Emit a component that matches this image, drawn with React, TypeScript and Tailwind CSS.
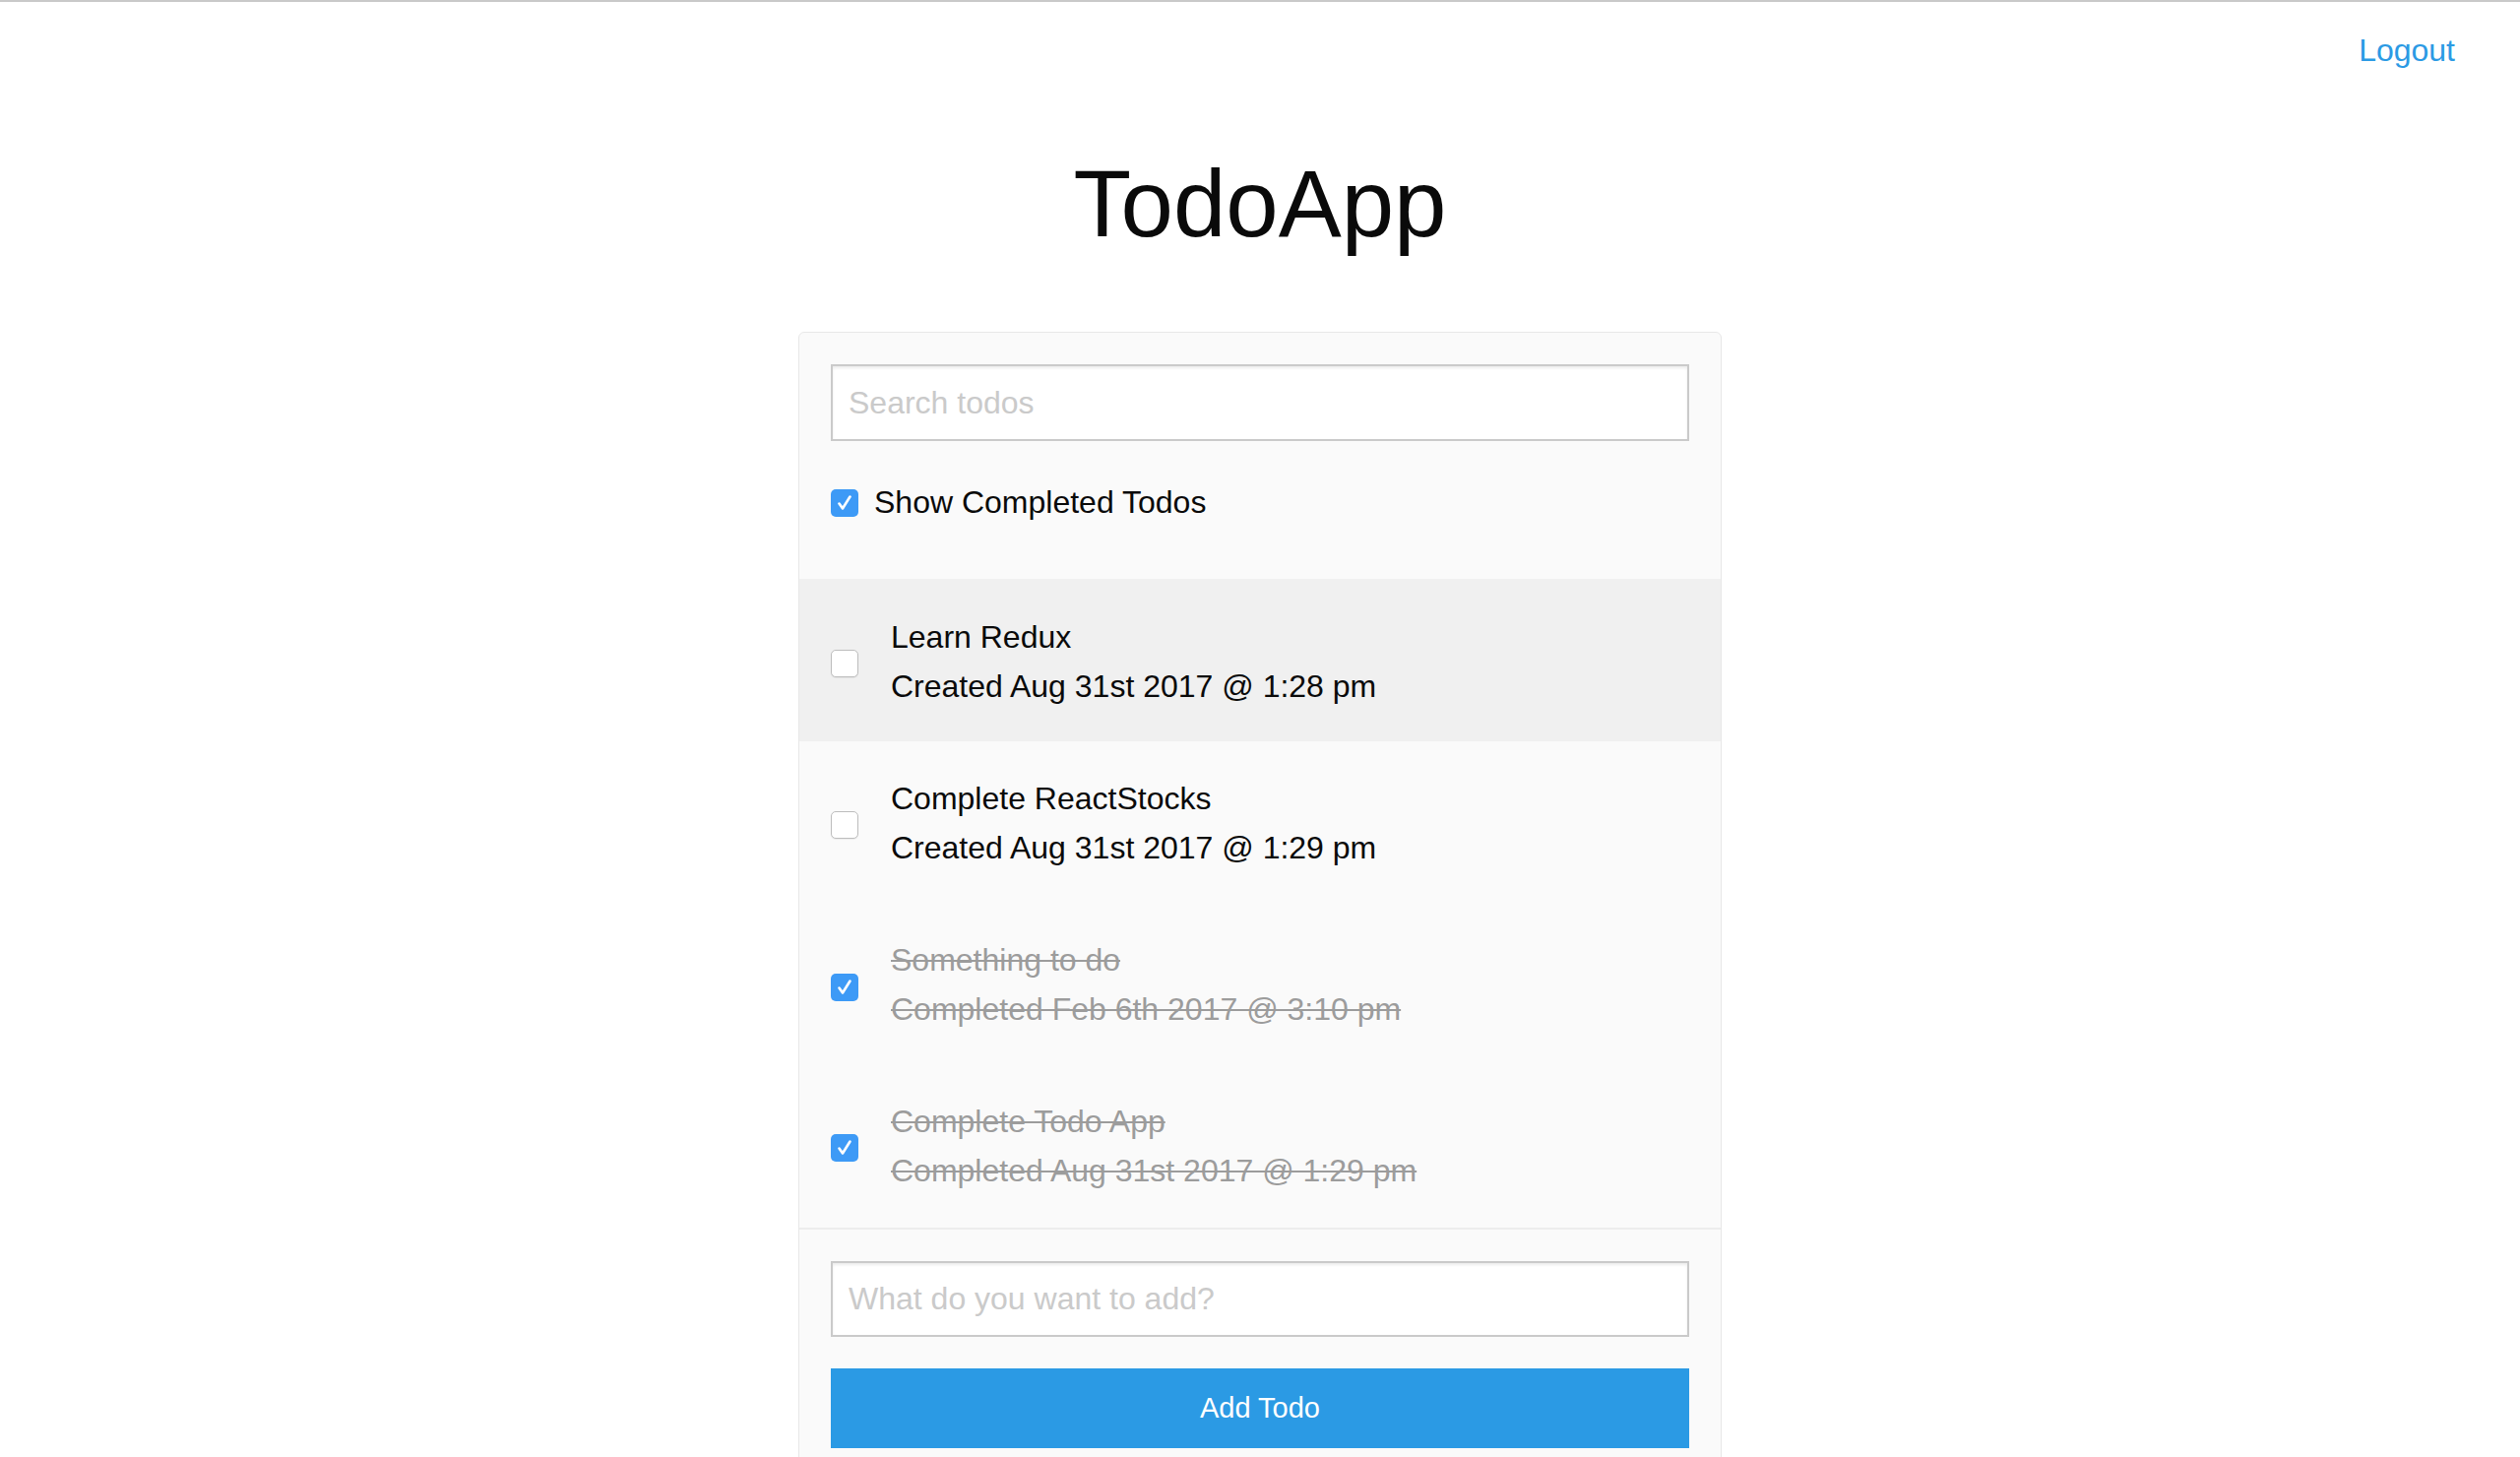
import React from "react";

const Check = ({ checked }: { checked: boolean }) =>
  checked ? (
    <div className="w-[28px] h-[28px] rounded-[5px] bg-[#3d9af6] flex items-center justify-center shrink-0">
      <svg width="28" height="28" viewBox="0 0 28 28">
        <path d="M8.5 14.5 L12 19.5 L19.5 7.5" fill="none" stroke="#ffffff" strokeWidth="2.6" strokeLinecap="round" strokeLinejoin="round" />
      </svg>
    </div>
  ) : (
    <div className="w-[28px] h-[28px] rounded-[5px] bg-white border border-[#bdbdbd] shadow-[0_1px_1px_rgba(0,0,0,0.06)] shrink-0" />
  );

type Todo = { text: string; sub: string; done: boolean; bg: string; h: string; pt: string; cb: string };

const todos: Todo[] = [
  { text: "Learn Redux", sub: "Created Aug 31st 2017 @ 1:28 pm", done: false, bg: "bg-[#f0f0f0]", h: "h-[165px]", pt: "pt-[34px]", cb: "mt-[72px]" },
  { text: "Complete ReactStocks", sub: "Created Aug 31st 2017 @ 1:29 pm", done: false, bg: "bg-[#fafafa]", h: "h-[164px]", pt: "pt-[33px]", cb: "mt-[71px]" },
  { text: "Something to do", sub: "Completed Feb 6th 2017 @ 3:10 pm", done: true, bg: "bg-[#fafafa]", h: "h-[165px]", pt: "pt-[33px]", cb: "mt-[72px]" },
  { text: "Complete Todo App", sub: "Completed Aug 31st 2017 @ 1:29 pm", done: true, bg: "bg-[#fafafa]", h: "h-[165px]", pt: "pt-[32px]", cb: "mt-[70px]" },
];

export default function App() {
  return (
    <div
      className="min-h-screen bg-white border-t-2 border-[#c9c9c9] text-[#0a0a0a]"
      style={{ fontFamily: '"Liberation Sans", Arial, Helvetica, sans-serif' }}
    >
      <div className="flex justify-end pr-[66px] pt-[25px]">
        <a className="text-[32px] leading-[48px] text-[#2b9ae4] cursor-pointer">Logout</a>
      </div>
      <h1 className="mt-[65px] text-center text-[96px] leading-[134px] font-normal">TodoApp</h1>
      <div className="mt-[63px] mx-auto w-[938px] bg-[#fafafa] border border-[#e8e8e8] rounded-t-[6px] overflow-hidden">
        <div className="px-[32px] pt-[32px] pb-[46px]">
          <input
            className="block w-full h-[78px] bg-white border-2 border-[#cacaca] px-[16px] text-[32px] outline-none placeholder:text-[#cacaca] shadow-[inset_0_2px_3px_rgba(10,10,10,0.08)]"
            placeholder="Search todos"
          />
          <div className="mt-[32px] h-[62px] flex items-center gap-[16px]">
            <Check checked={true} />
            <span className="text-[32px] leading-[48px] -mt-[2px]">Show Completed Todos</span>
          </div>
        </div>
        {todos.map((t) => (
          <div key={t.text} className={`flex items-start pl-[32px] gap-[33px] ${t.bg} ${t.h}`}>
            <div className={t.cb}>
              <Check checked={t.done} />
            </div>
            <div
              className={`${t.pt} text-[32px] leading-[50px] ${
                t.done ? "text-[#9c9c9c] line-through decoration-[2px]" : "text-[#0a0a0a]"
              }`}
            >
              <div>{t.text}</div>
              <div>{t.sub}</div>
            </div>
          </div>
        ))}
        <div className="border-t-2 border-[#ededed] px-[32px] pt-[32px] pb-[20px]">
          <input
            className="block w-full h-[77px] bg-white border-2 border-[#cacaca] px-[16px] text-[32px] outline-none placeholder:text-[#cacaca] shadow-[inset_0_2px_3px_rgba(10,10,10,0.08)]"
            placeholder="What do you want to add?"
          />
          <button className="mt-[32px] w-full h-[81px] bg-[#2b9ae4] text-white text-[29px] leading-none">
            Add Todo
          </button>
        </div>
      </div>
    </div>
  );
}
